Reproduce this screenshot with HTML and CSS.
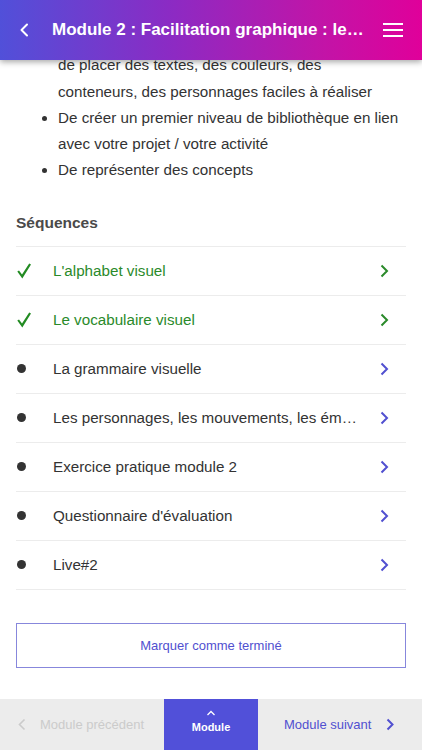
FILE: index.html
```html
<!DOCTYPE html>
<html lang="fr">
<head>
<meta charset="utf-8">
<title>Module 2</title>
<link rel="stylesheet" href="styles.css">
</head>
<body>
<div class="app">
  <header class="topbar">
    <button class="icon-btn back" aria-label="Retour">
      <svg width="10" height="14" viewBox="0 0 10 14"><path d="M8 1.5 L2.5 7 L8 12.5" fill="none" stroke="#fff" stroke-width="2" stroke-linecap="round" stroke-linejoin="round"/></svg>
    </button>
    <h1 class="title">Module 2 : Facilitation graphique : les bases du dessin</h1>
    <button class="icon-btn menu" aria-label="Menu">
      <svg width="22" height="16" viewBox="0 0 22 16"><path d="M1 2 H21 M1 8 H21 M1 14 H21" stroke="#fff" stroke-width="2" fill="none"/></svg>
    </button>
  </header>

  <main class="content">
    <ul class="goals">
      <li><span class="line">D'acquérir une méthode simple permettant</span>de placer des textes, des couleurs, des conteneurs, des personnages faciles à réaliser</li>
      <li>De créer un premier niveau de bibliothèque en lien avec votre projet / votre activité</li>
      <li>De représenter des concepts</li>
    </ul>

    <h2 class="section-title">Séquences</h2>
    <ul class="seq">
      <li class="row done"><span class="mark"><svg class="check" width="14" height="16" viewBox="0 0 14 16"><path d="M0.3 8.6 L2 7.6 L5 11.6 L12.2 0.6 L14 1.6 L5.3 15.4 Z" fill="currentColor"/></svg></span><span class="label">L'alphabet visuel</span><svg class="chev" width="10" height="14" viewBox="0 0 10 14"><path d="M2.5 1.5 L8 7 L2.5 12.5" fill="none" stroke="currentColor" stroke-width="2"/></svg></li>
      <li class="row done"><span class="mark"><svg class="check" width="14" height="16" viewBox="0 0 14 16"><path d="M0.3 8.6 L2 7.6 L5 11.6 L12.2 0.6 L14 1.6 L5.3 15.4 Z" fill="currentColor"/></svg></span><span class="label">Le vocabulaire visuel</span><svg class="chev" width="10" height="14" viewBox="0 0 10 14"><path d="M2.5 1.5 L8 7 L2.5 12.5" fill="none" stroke="currentColor" stroke-width="2"/></svg></li>
      <li class="row"><span class="mark"><span class="dot"></span></span><span class="label">La grammaire visuelle</span><svg class="chev" width="10" height="14" viewBox="0 0 10 14"><path d="M2.5 1.5 L8 7 L2.5 12.5" fill="none" stroke="currentColor" stroke-width="2"/></svg></li>
      <li class="row"><span class="mark"><span class="dot"></span></span><span class="label">Les personnages, les mouvements, les émotions</span><svg class="chev" width="10" height="14" viewBox="0 0 10 14"><path d="M2.5 1.5 L8 7 L2.5 12.5" fill="none" stroke="currentColor" stroke-width="2"/></svg></li>
      <li class="row"><span class="mark"><span class="dot"></span></span><span class="label">Exercice pratique module 2</span><svg class="chev" width="10" height="14" viewBox="0 0 10 14"><path d="M2.5 1.5 L8 7 L2.5 12.5" fill="none" stroke="currentColor" stroke-width="2"/></svg></li>
      <li class="row"><span class="mark"><span class="dot"></span></span><span class="label">Questionnaire d'évaluation</span><svg class="chev" width="10" height="14" viewBox="0 0 10 14"><path d="M2.5 1.5 L8 7 L2.5 12.5" fill="none" stroke="currentColor" stroke-width="2"/></svg></li>
      <li class="row"><span class="mark"><span class="dot"></span></span><span class="label">Live#2</span><svg class="chev" width="10" height="14" viewBox="0 0 10 14"><path d="M2.5 1.5 L8 7 L2.5 12.5" fill="none" stroke="currentColor" stroke-width="2"/></svg></li>
    </ul>

    <button class="done-btn">Marquer comme terminé</button>
  </main>

  <nav class="bottombar">
    <button class="nav-btn prev">
      <svg width="8" height="13" viewBox="0 0 8 13"><path d="M6.5 1.5 L1.5 6.5 L6.5 11.5" fill="none" stroke="currentColor" stroke-width="1.6"/></svg>
      <span>Module précédent</span>
    </button>
    <button class="nav-btn module">
      <svg width="10" height="6" viewBox="0 0 10 6"><path d="M1.5 5 L5 1.5 L8.5 5" fill="none" stroke="#fff" stroke-width="1.3"/></svg>
      <span>Module</span>
    </button>
    <button class="nav-btn next">
      <span>Module suivant</span>
      <svg width="8" height="13" viewBox="0 0 8 13"><path d="M1.5 1.5 L6.5 6.5 L1.5 11.5" fill="none" stroke="currentColor" stroke-width="2"/></svg>
    </button>
  </nav>
</div>
</body>
</html>
```

FILE: styles.css
```css
* { box-sizing: border-box; }
html, body { margin: 0; padding: 0; }
body {
  font-family: "Liberation Sans", Arial, sans-serif;
  background: #fff;
  color: #333;
}
button { font-family: inherit; border: none; background: none; padding: 0; cursor: pointer; }

.app {
  position: relative;
  width: 422px;
  height: 750px;
  overflow: hidden;
  display: flex;
  flex-direction: column;
}

.topbar {
  position: absolute;
  top: 0;
  left: 0;
  right: 0;
  height: 60px;
  z-index: 2;
  display: flex;
  align-items: center;
  background: linear-gradient(to right, #5150d9 0%, #8b2bc4 40%, #c015a8 75%, #e0009a 100%);
  box-shadow: 0 2px 6px rgba(0, 0, 0, 0.35);
}
.icon-btn { display: flex; align-items: center; justify-content: center; }
.back { width: 52px; height: 60px; justify-content: flex-start; padding-left: 19px; }
.title {
  flex: 1;
  min-width: 0;
  margin: 0;
  color: #fff;
  font-size: 17px;
  font-weight: bold;
  white-space: nowrap;
  overflow: hidden;
  text-overflow: ellipsis;
}
.menu { width: 56px; height: 60px; padding-right: 2px; }

.content {
  flex: 1;
  padding: 26px 16px 0 16px;
  overflow: hidden;
}

.goals {
  margin: 0;
  padding: 0 6px 0 42px;
  font-size: 15.2px;
  line-height: 26.25px;
  color: #333;
}
.goals .line { display: block; }

.section-title {
  margin: 29px 0 0 0;
  font-size: 15.5px;
  line-height: 20px;
  font-weight: bold;
  color: #4a4a4a;
}

.seq {
  list-style: none;
  margin: 13px 0 0 0;
  padding: 0;
  border-top: 1px solid #ececec;
}
.row {
  height: 49px;
  display: flex;
  align-items: center;
  border-bottom: 1px solid #ececec;
  font-size: 15.2px;
  color: #333;
}
.row .chev { color: #5150d0; flex: none; margin: 0 17px 0 0; }
.row.done { color: #2a8a2a; }
.row.done .chev { color: #2a8a2a; }
.mark {
  width: 37px;
  flex: none;
  display: flex;
  align-items: center;
}
.check { display: block; margin-left: 1px; color: #228b22; }
.dot {
  display: block;
  width: 9px;
  height: 9px;
  border-radius: 50%;
  background: #333;
  margin-left: 1px;
}
.label {
  flex: 1;
  min-width: 0;
  white-space: nowrap;
  overflow: hidden;
  text-overflow: ellipsis;
  padding-right: 16px;
}

.done-btn {
  display: block;
  width: 100%;
  height: 45px;
  margin-top: 33px;
  border: 1.5px solid #8787dc;
  color: #5150d0;
  font-size: 13px;
  background: #fff;
}

.bottombar {
  flex: none;
  height: 51px;
  display: grid;
  grid-template-columns: 164px 94px 1fr;
  background: #ececec;
}
.nav-btn {
  display: flex;
  align-items: center;
  font-size: 13px;
}
.prev { color: #cbcbcb; padding-left: 18px; gap: 14px; }
.module {
  background: #5150d9;
  color: #fff;
  flex-direction: column;
  justify-content: center;
  gap: 5px;
  font-size: 11px;
  font-weight: bold;
  padding-bottom: 6px;
}
.next { color: #5150d0; padding-left: 26px; gap: 15px; }
```
